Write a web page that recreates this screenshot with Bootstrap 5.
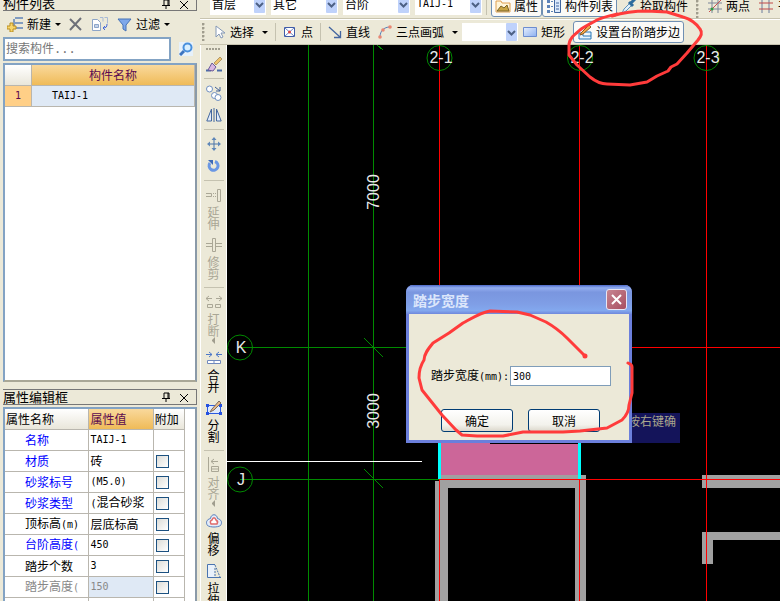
<!DOCTYPE html>
<html lang="zh-CN">
<head>
<meta charset="utf-8">
<meta name="viewport" content="width=device-width, initial-scale=1">
<title>踏步宽度</title>
<link href="https://cdn.jsdelivr.net/npm/bootstrap@5.3.0/dist/css/bootstrap.min.css" rel="stylesheet">
<style>
body{background:#ece9d8;color:#000;font:12px/16px "Noto Sans CJK SC",sans-serif}
button,input,select{font:inherit;color:inherit}
.mono{font-family:"DejaVu Sans Mono","Noto Sans CJK SC",monospace;font-size:10px}
.plain{border:0;background:none;padding:0;white-space:nowrap}
svg{display:block;flex:none}
/* left dock */
.dock{width:200px;padding-left:3px;padding-right:3px}
.dock-title{border:1px solid #777;border-left:0;height:16px;padding-right:4px;margin-top:7px;font-size:13px;line-height:14px}
.dock-title.cut{height:11px;margin-top:0;border-top:0;overflow:hidden}
.dock-title button{width:14px}
.dock-tools{height:26px;gap:8px}
.search-row{gap:4px;margin-bottom:2px}
.search-box{border:2px solid #83a3c4;height:24px;padding:0 1px;color:#777;background:#fff;min-width:0}
.search-box.mono{font-size:12px}
.search-box::placeholder{color:#777;opacity:1}
.sheet{border:2px solid #83a3c4;border-right-color:#8a9aa8;border-bottom-color:#a9a796;background:#fff}
.sheet.parts{height:319px}
.sheet.props{margin-top:2px;border-bottom:0}
.sheet.props table{width:180px}
.sheet table{border-collapse:separate;border-spacing:0;table-layout:fixed}
.sheet th,.sheet td{border-right:1px solid #b9b6ae;border-bottom:1px solid #b9b6ae;font-weight:400;padding:0 1px;height:21px;line-height:16px;overflow:hidden;white-space:nowrap}
.sheet th{background:linear-gradient(#fff,#e9e6da)}
.sheet .hot{background:linear-gradient(#f9d99c,#efbb58);color:#5a0a50}
.sheet .num{background:#ffcf87;color:#5a0a50;text-align:center}
.sheet .sel{background:#dfe9f5}
.c-num{width:27px}.c-name{width:84px}.c-val{width:64px}.c-add{width:31px}
.sheet .names th[scope=row]{background:#fff;padding-left:20px}
.names .blue{color:#00f}
.names .off{color:#888}
.tick{appearance:none;display:block;width:13px;height:13px;margin:0 1px;border:1px solid #1c5180;background:linear-gradient(135deg,#dcdcd7,#fff)}
/* toolbars */
.bar1,.bar2{padding-left:2px}
.bar1{height:19px;border-bottom:1px solid #c8c4b0}
.bar2{height:26px;border-top:1px solid #fff;border-bottom:1px solid #c8c4b0}
.bar2>.vsep{margin:0 7px}
.grip{width:3px;align-self:stretch;background:radial-gradient(circle at 1px 1px,#a09d8e 1px,transparent 2px) 0 0/3px 4px;margin:3px 0}
.vsep{width:1px;height:18px;background:#c5c2b0}
.combo{appearance:none;border:0;border-radius:0;width:67px;height:18px;line-height:18px;padding:0 14px 0 2px;background:#fff url("data:image/svg+xml,%3Csvg xmlns='http://www.w3.org/2000/svg' width='12' height='18'%3E%3Crect width='11' height='18' rx='1' fill='%23bfd2fb'/%3E%3Cpath d='M2 8l3.5 3.5L9 8' fill='none' stroke='%234d6185' stroke-width='2'/%3E%3C/svg%3E") no-repeat right center}
.combo.w-s{width:56px}
.combos{gap:5px;padding-left:4px}
.bar1 .combo{height:22px}
.bar1>*{margin-bottom:3px}
.bar1>.grip{margin-bottom:0;margin-top:0;height:18px}
.boxed{border:1px solid #6f8fb3;border-radius:3px;background:#fbfaf7;padding:0 3px}
.bar1 .boxed,.bar1 .flat{height:22px;margin-bottom:1px}
.bar2 .boxed{height:22px;margin-left:2px}
.caret{border:3px solid transparent;border-top:3px solid #000;border-bottom:0}
.gap-3px{gap:3px}
/* vertical toolbar */
.rail{width:27px;gap:6px;padding-top:3px;border-left:1px solid #fff;border-right:1px solid #fff}
.rail .hgrip{width:15px;height:2px;background:repeating-linear-gradient(90deg,#a09d8e 0 2px,transparent 2px 3px)}
.rail .hsep{width:20px;height:1px;background:#c5c2b0}
.rail .lbl{width:12px;line-height:12px;white-space:normal;margin-top:3px;margin-bottom:1px}
.rail .off{color:#a9a695}
.rail .more{border:3px solid transparent;border-right-color:#a09d8e;border-left:0;width:3px;height:7px}
/* drawing and dialog */
.view{background:#000}
.view text{font:16px "Liberation Sans",sans-serif;fill:#e8e8e8}
.hint{left:401px;top:368px;width:52px;height:30px;background:#14145a;color:#aaa68c;line-height:16px}
.dlg{left:179px;top:240px;width:226px;height:158px;background:#ece9d8;border:3px solid #6b7fdc;border-top:0;border-radius:7px 7px 0 0}
.dlg-head{height:29px;margin:0 -3px;padding:0 5px 0 7px;border-radius:7px 7px 0 0;background:linear-gradient(#4c68c8,#93aef0 10%,#7a96df 25%,#7f9ee6 65%,#83a8ee 88%,#6f88dc);color:#dce6fb;font-size:14px;font-weight:700}
.dlg-x{width:21px;height:21px;border:1px solid #e8e6f4;border-radius:3px;background:linear-gradient(135deg,#c78591,#a84e60);padding:3px}
.dlg input{width:101px;height:20px;border:1px solid #7f9db9;background:#fff;padding:0 2px}
.dlg-btn{width:72px;height:23px;border:1px solid #003c74;border-radius:3px;background:linear-gradient(#fff,#f3f2ec 70%,#dcd8cc);padding:0}
.dlg-form{padding:52px 18px 0 22px}
.dlg-form .row-btns{padding-top:23px;padding-left:10px;gap:15px}
.marks{pointer-events:none}
</style>
<script src="https://cdn.jsdelivr.net/npm/bootstrap@5.3.0/dist/js/bootstrap.bundle.min.js"></script>
</head>
<body class="vh-100 overflow-hidden position-relative d-flex">

<aside class="dock d-flex flex-column flex-shrink-0 h-100">
  <div class="dock-title cut d-flex align-items-end justify-content-between flex-shrink-0">
    <span>构件列表</span>
    <span class="d-flex gap-1">
      <button class="plain" aria-label="固定"><svg width="12" height="12"><path d="M4 2h5v5M4 2v5M2 7.500h8M6 8v3M8 2v5" fill="none" stroke="#000"/></svg></button>
      <button class="plain" aria-label="关闭"><svg width="12" height="12"><path d="M2 3l8 8M10 3l-8 8" stroke="#000"/></svg></button>
    </span>
  </div>
  <div class="dock-tools d-flex align-items-center ps-1 flex-shrink-0">
    <button class="plain d-flex align-items-center gap-1"><svg width="16" height="16"><path d="M8 2h8M8 7h8M6 12h10M7 3v10" stroke="#5d83b8" stroke-width="1.500" fill="none"/><path d="M3 7h3v3h3v3H6v3H3v-3H0v-3h3z" fill="#f8d66a" stroke="#b98d1e"/></svg><span>新建</span><i class="caret"></i></button>
    <button class="plain" aria-label="删除"><svg width="14" height="14"><path d="M1 2l11 11M12 1L1 13" stroke="#6d7079" stroke-width="2"/></svg></button>
    <button class="plain" aria-label="复制"><svg width="18" height="16"><path d="M1.500 3.500h5l3 3v8h-8z" fill="#fff" stroke="#8da5c8"/><path d="M3.500 8.500h4v3h-4z" fill="#c7d5ea" stroke="#8da5c8"/><path d="M9 1.500h3v4M13.500 1.500h3v6" fill="none" stroke="#a7b9d6"/><path d="M16 8c0 3-1 4-4 4M14 10l-2 2 2 2" fill="none" stroke="#4468d8"/></svg></button>
    <button class="plain d-flex align-items-center gap-1"><svg width="15" height="15"><path d="M1 2h13L9 8v6l-3-2V8z" fill="#7fa8ea" stroke="#4673b8"/></svg><span>过滤</span><i class="caret"></i></button>
  </div>
  <div class="search-row d-flex align-items-center flex-shrink-0">
    <input class="search-box flex-fill mono" type="text" placeholder="搜索构件..." aria-label="搜索构件">
    <button class="plain px-1" aria-label="搜索"><svg width="14" height="14"><rect width="14" height="14" fill="#e6f1fb"/><path d="M5 9L1 13" stroke="#3d75c0" stroke-width="3"/><circle cx="8.500" cy="5.500" r="4" fill="#d8efff" stroke="#4a90dc" stroke-width="2"/></svg></button>
  </div>
  <div class="sheet parts flex-shrink-0">
    <table class="w-100">
      <colgroup><col class="c-num"><col></colgroup>
      <tr><th></th><th class="hot text-center">构件名称</th></tr>
      <tr><td class="num mono">1</td><td class="sel mono ps-3"><span class="ps-1">TAIJ-1</span></td></tr>
    </table>
  </div>
  <div class="dock-title d-flex align-items-center justify-content-between flex-shrink-0">
    <span>属性编辑框</span>
    <span class="d-flex gap-1">
      <button class="plain" aria-label="固定"><svg width="12" height="12"><path d="M4 2h5v5M4 2v5M2 7.500h8M6 8v3M8 2v5" fill="none" stroke="#000"/></svg></button>
      <button class="plain" aria-label="关闭"><svg width="12" height="12"><path d="M2 3l8 8M10 3l-8 8" stroke="#000"/></svg></button>
    </span>
  </div>
  <div class="sheet props flex-fill overflow-hidden">
    <table class="names">
      <colgroup><col class="c-name"><col class="c-val"><col class="c-add"></colgroup>
      <tr><th>属性名称</th><th class="hot">属性值</th><th>附加</th></tr>
      <tr><th scope="row" class="blue">名称</th><td class="mono">TAIJ-1</td><td></td></tr>
      <tr><th scope="row" class="blue">材质</th><td>砖</td><td><input class="tick" type="checkbox" aria-label="材质 附加"></td></tr>
      <tr><th scope="row" class="blue">砂浆标号</th><td class="mono">(M5.0)</td><td><input class="tick" type="checkbox" aria-label="砂浆标号 附加"></td></tr>
      <tr><th scope="row" class="blue">砂浆类型</th><td><span class="mono">(</span>混合砂浆</td><td><input class="tick" type="checkbox" aria-label="砂浆类型 附加"></td></tr>
      <tr><th scope="row">顶标高<span class="mono">(m)</span></th><td>层底标高</td><td><input class="tick" type="checkbox" aria-label="顶标高 附加"></td></tr>
      <tr><th scope="row" class="blue">台阶高度<span class="mono">(</span></th><td class="mono">450</td><td><input class="tick" type="checkbox" aria-label="台阶高度 附加"></td></tr>
      <tr><th scope="row">踏步个数</th><td class="mono">3</td><td><input class="tick" type="checkbox" aria-label="踏步个数 附加"></td></tr>
      <tr><th scope="row" class="off">踏步高度<span class="mono">(</span></th><td class="mono sel off">150</td><td><input class="tick" type="checkbox" aria-label="踏步高度 附加"></td></tr>
      <tr><th scope="row"></th><td></td><td></td></tr>
    </table>
  </div>
</aside>

<main class="d-flex flex-column flex-fill h-100 overflow-hidden">
  <div class="bar1 d-flex align-items-end flex-shrink-0 overflow-hidden">
    <span class="grip me-1"></span>
    <div class="combos d-flex flex-shrink-0">
      <select class="combo w-s" aria-label="楼层"><option>首层</option></select>
      <select class="combo" aria-label="类别"><option>其它</option></select>
      <select class="combo" aria-label="构件类型"><option>台阶</option></select>
      <select class="combo mono" aria-label="构件"><option>TAIJ-1</option></select>
    </div>
    <span class="vsep mx-1 flex-shrink-0"></span>
    <button class="plain boxed d-flex align-items-center gap-3px flex-shrink-0"><svg width="16" height="16"><path d="M1 3h5l1 2h8v9H1z" fill="#fff4d8" stroke="#e0a050"/><path d="M2 13l4-5 3 2 3-3 2 6z" fill="#caa544" stroke="#7b6326"/></svg>属性</button>
    <button class="plain boxed d-flex align-items-center gap-3px flex-shrink-0"><svg width="16" height="16"><path d="M1 2h3v3H1zM1 7h3v3H1zM1 12h3v3H1z" fill="#5d83b8"/><path d="M5 3.500h2M5 8.500h2M5 13.500h2" stroke="#5d83b8"/><path d="M8.500 1.500h6v13h-6z" fill="#dce9fb" stroke="#41669f"/><path d="M10 5h3M10 8h3M10 11h3" stroke="#41669f"/></svg>构件列表</button>
    <button class="plain flat d-flex align-items-center gap-3px flex-shrink-0 ps-1"><svg width="16" height="16"><path d="M1 15l2-4 6-6 2 2-6 6z" fill="#dff0fb" stroke="#5f93bb"/><path d="M8 4l4 4M10 5l4-4" stroke="#2c6b9d" stroke-width="3"/></svg>拾取构件</button>
    <span class="grip mx-2 flex-shrink-0"></span>
    <button class="plain flat d-flex align-items-center gap-3px flex-shrink-0"><svg width="16" height="16"><path d="M5 1v14M11 1v14M1 5h14M1 11h14" stroke="#7a8599"/><path d="M2 14L14 2" stroke="#c65050"/><circle cx="5" cy="11" r="1.500" fill="#2f9a3b"/></svg>两点</button>
    <button class="plain flat d-flex align-items-center gap-1 flex-shrink-0 ms-2"><svg width="16" height="16"><path d="M4 1v14M11 1v14" stroke="#6c7d9c"/><path d="M1 5h14M1 11h14" stroke="#c04848"/></svg>平行</button>
  </div>

  <div class="bar2 d-flex align-items-center flex-shrink-0 overflow-hidden">
    <span class="grip"></span>
    <button class="plain d-flex align-items-center gap-1 flex-shrink-0 ps-2"><svg width="13" height="14"><path d="M3 1v11l3-3 2 4 2-1-2-4h4z" fill="#fff" stroke="#8498b6"/></svg><span class="pe-1">选择</span><i class="caret"></i></button>
    <span class="vsep flex-shrink-0"></span>
    <button class="plain d-flex align-items-center gap-1 flex-shrink-0"><svg width="14" height="14"><path d="M1.500 2.500h10v9h-10z" fill="#fff" stroke="#3f5ca8"/><path d="M2 3l9 8M11 3l-9 8" stroke="#6f87c4"/><circle cx="6.500" cy="7" r="1.500" fill="#d44"/></svg>点</button>
    <span class="vsep flex-shrink-0"></span>
    <button class="plain d-flex align-items-center gap-1 flex-shrink-0"><svg width="14" height="14"><path d="M1 2l11 10M12.500 6v6.500H6" fill="none" stroke="#4365a0" stroke-width="1.300"/></svg>直线</button>
    <button class="plain d-flex align-items-center gap-1 flex-shrink-0 ms-2"><svg width="14" height="14"><path d="M2 12C2 6 6 2 12 2" fill="none" stroke="#557fb8"/><circle cx="2" cy="12" r="1.800" fill="#e98773"/><circle cx="5" cy="5" r="1.800" fill="#e98773"/><circle cx="12" cy="2" r="1.800" fill="#e98773"/></svg><span class="pe-1">三点画弧</span><i class="caret"></i></button>
    <select class="combo w-s flex-shrink-0 ms-1" aria-label="画法"><option></option></select>
    <button class="plain d-flex align-items-center gap-3px flex-shrink-0 ms-1"><svg width="16" height="12"><defs><linearGradient id="rg" x2="1" y2="1"><stop stop-color="#e6effd"/><stop offset="1" stop-color="#8db0f0"/></linearGradient></defs><path d="M1.500 1.500h13v9h-13z" fill="url(#rg)" stroke="#6c8dd0"/></svg>矩形</button>
    <button class="plain boxed d-flex align-items-center gap-3px flex-shrink-0 ms-2"><svg width="16" height="16"><path d="M2 9h4v3h8v3H2zM8 8h6v4" fill="#e6f3fc" stroke="#2a79b8"/><path d="M4 9l8-8 2 2-8 7-3 1z" fill="#f3a94a" stroke="#8b5a20"/></svg>设置台阶踏步边</button>
  </div>

  <div class="d-flex flex-fill overflow-hidden">
    <nav class="rail d-flex flex-column align-items-center flex-shrink-0 overflow-hidden" aria-label="修改工具">
      <i class="hgrip flex-shrink-0"></i>
      <button class="plain" aria-label="刷"><svg width="16" height="16"><path d="M0 14.500h5M11 14.500h5" stroke="#4a6ca8" stroke-width="2"/><path d="M8 7l6-6 2 2-6 6z" fill="#efc36b" stroke="#8c7040" stroke-width=".6"/><path d="M6 7l4 4-3 4-5-1z" fill="#d9b7e2" stroke="#6a5a99"/></svg></button>
      <i class="hsep flex-shrink-0"></i>
      <button class="plain" aria-label="复制"><svg width="16" height="16" fill="#fff" stroke="#6f8fc0"><circle cx="3.500" cy="4" r="3"/><circle cx="8.500" cy="10.500" r="3"/><circle cx="12" cy="12.500" r="3"/><path d="M9 2l5 4M14 2v4h-4" fill="none" stroke="#3f5f98"/></svg></button>
      <button class="plain" aria-label="镜像"><svg width="16" height="16"><path d="M5.500 2v12H.8zM10.500 2v12h4.700z" fill="#e2ecfa" stroke="#44689f"/><path d="M8 1v14" stroke="#44689f"/></svg></button>
      <i class="hsep flex-shrink-0"></i>
      <button class="plain" aria-label="移动"><svg width="16" height="16"><path d="M8 2v12M2 8h12" stroke="#4a74a8"/><path d="M8 1l2.500 3h-5zM8 15l2.500-3h-5zM1 8l3-2.500v5zM15 8l-3-2.500v5z" fill="#5f87b8"/></svg></button>
      <button class="plain" aria-label="旋转"><svg width="16" height="16"><path d="M4 5a4.500 4.500 0 1 0 5-1.500" fill="none" stroke="#6a97e4" stroke-width="3"/><path d="M2 2h5v5z" fill="#3d6ab8"/></svg></button>
      <i class="hsep flex-shrink-0"></i>
      <button class="plain off"><svg width="16" height="16" fill="none" stroke="#aaa796"><path d="M0 6.500h5.500v3H0M7 6.500h1M7 9.500h1M9 6.500h1M9 9.500h1M11.500 2.500h3v12h-3z"/></svg><span class="lbl d-block mx-auto">延伸</span></button>
      <button class="plain off"><svg width="16" height="16" fill="none" stroke="#aaa796"><path d="M0 6.500h6M0 9.500h6M10 6.500h6M10 9.500h6M6.500 1.500h3v13h-3z"/></svg><span class="lbl d-block mx-auto">修剪</span></button>
      <i class="hsep flex-shrink-0"></i>
      <button class="plain off"><svg width="16" height="16" fill="none" stroke="#aaa796"><path d="M0 4.500h6M3 2L0 4.500 3 7M10 4.500h6M13 2l3 2.500L13 7M1.500 10.500h5v3h-5zM9.500 10.500h5v3h-5z"/></svg><span class="lbl d-block mx-auto mb-0">打断</span><i class="more d-block mx-auto"></i></button>
      <button class="plain"><svg width="16" height="16" fill="none" stroke="#4d78c8"><path d="M0 4.500h6M3 2l3 2.500L3 7M10 4.500h6M13 2l-3 2.500L13 7"/><path d="M1.500 10.500h13v3h-13zM8 10v4" fill="#fff" stroke="#7089bd"/></svg><span class="lbl d-block mx-auto">合并</span></button>
      <button class="plain"><svg width="16" height="16"><path d="M1.500 5.500h13v8h-13z" fill="#dfeafc" stroke="#2d5be0"/><path d="M0 4h3v3H0zM13 4h3v3h-3zM0 12h3v3H0zM13 12h3v3h-3z" fill="#2450e0"/><path d="M4 12l2-3 7-8 2 2-7 7z" fill="#e8b98a" stroke="#7c6a5c"/></svg><span class="lbl d-block mx-auto">分割</span></button>
      <i class="hsep flex-shrink-0"></i>
      <button class="plain off"><svg width="16" height="16" fill="none" stroke="#aaa796"><path d="M2.500 0v15M5 4.500h7M8 2L5 4.500 8 7M5.500 9.500h7v5h-7zM5 12h7"/></svg><span class="lbl d-block mx-auto mb-0">对齐</span><i class="more d-block mx-auto"></i></button>
      <button class="plain"><svg width="16" height="16"><path d="M4.500 5.500C5 .5 11 .5 11.500 5.500c4 1 5 4 3 7-3 2-10 2-13 0-2-3-1-6 3-7z" fill="#e2edfb" stroke="#5a7fbc"/><path d="M6 7c1-3 3-3 4 0 2 1 2 2 1 4H5c-1-2-1-3 1-4z" fill="#fff" stroke="#e06a6a" stroke-width="1.500"/></svg><span class="lbl d-block mx-auto">偏移</span></button>
      <button class="plain"><svg width="16" height="16"><path d="M1.500 1.500h7v13h-7z" fill="#e9f1fb"/><path d="M9 1.500H1.500v13H15" fill="none" stroke="#4a74b0"/><path d="M9 2l5 12M9 5v8" stroke="#4a74b0" fill="none" stroke-dasharray="2 1"/></svg><span class="lbl d-block mx-auto">拉伸</span></button>
    </nav>

    <section class="view flex-fill position-relative overflow-hidden">
      <svg class="position-absolute" width="100%" height="100%" role="img" aria-label="轴网图">
        <g transform="translate(-227 -45)" fill="none" shape-rendering="crispEdges">
          <path d="M439 442h141v36H439z" fill="#cc6699"/>
          <path d="M439 475h147v13H439zM435 481h13v200h-13zM575 475h11v200h-11zM702 475h900v13H702zM702 532h900v8H713v24h-11z" fill="#a0a0a0"/>
          <path d="M490 443.500h90" stroke="#000"/>
          <path d="M439.500 443v36M579.500 443v36" stroke="#0ff" stroke-width="3"/>
          <path d="M308.500 45v900M373.500 45v900M240 347.500h199M240 479.500h199M364 338l19 19M364 469l19 19M377 45l6 5" stroke="#008a00"/>
          <path d="M227 461.500h195" stroke="#fff"/>
          <path d="M439 347.500h1200M439 479.500h1200M439.500 45v397M439.500 479v900M579.500 45v397M579.500 479v900M706.500 45v900" stroke="#f00"/>
          <g stroke="#008a00" shape-rendering="auto"><circle cx="439.500" cy="58" r="12.500"/><circle cx="580" cy="58" r="12.500"/><circle cx="706.500" cy="58" r="12.500"/><circle cx="240" cy="347.500" r="12.500"/><circle cx="240" cy="479.500" r="12.500"/></g>
          <g text-anchor="middle"><text x="441" y="63">2-1</text><text x="582" y="63">2-2</text><text x="708" y="63">2-3</text><text x="241" y="353">K</text><text x="241" y="485">J</text>
          <text transform="translate(379 192) rotate(-90)">7000</text><text transform="translate(379 411) rotate(-90)">3000</text></g>
        </g>
      </svg>
      <div class="hint position-absolute text-nowrap">按右键确</div>
      <div class="dlg position-absolute" role="dialog" aria-labelledby="dlg-title">
        <div class="dlg-head d-flex align-items-center justify-content-between">
          <span id="dlg-title">踏步宽度</span>
          <button class="dlg-x" aria-label="关闭"><svg width="13" height="13"><path d="M2 2l9 9M11 2l-9 9" stroke="#fff" stroke-width="2"/></svg></button>
        </div>
        <form class="dlg-form">
          <div class="d-flex align-items-center justify-content-between">
            <label for="step-width" class="text-nowrap">踏步宽度<span class="mono">(mm):</span></label>
            <input id="step-width" class="mono" type="text" value="300">
          </div>
          <div class="row-btns d-flex">
            <button type="button" class="dlg-btn">确定</button>
            <button type="button" class="dlg-btn">取消</button>
          </div>
        </form>
      </div>
    </section>
  </div>
</main>

<svg class="marks position-absolute top-0 start-0" width="100%" height="100%" fill="none" stroke="#ff3b3b" stroke-width="3" stroke-linecap="round" stroke-linejoin="round" aria-hidden="true">
  <path d="M617 14C608 16 603 17 597 20C590 24 585 26 580 30C574 35 570 38 569 44L569 55L577 65L590 77C595 81 600 84 607 84L630 85L647 82L657 76L668 71L671 67L677 64L687 53L698 40C701 36 703 33 700 29C696 23 690 19 683 17L667 12L647 11C635 11 625 12 612 16"/>
  <path d="M585 356L567 338C559 330 553 326 546 322L530 315L517 312L490 311C482 312 474 317 463 323L449 333L433 343C428 349 424 354 424 360C420 366 419 372 419 378L422 390L442 415L456 430L462 435L477 436L503 436L523 432L563 432L580 431L607 428L622 420C627 415 629 411 629 405L632 393L632 367C632 364 630 364 628 363"/>
  <circle cx="585" cy="356" r="1"/>
</svg>
</body>
</html>
